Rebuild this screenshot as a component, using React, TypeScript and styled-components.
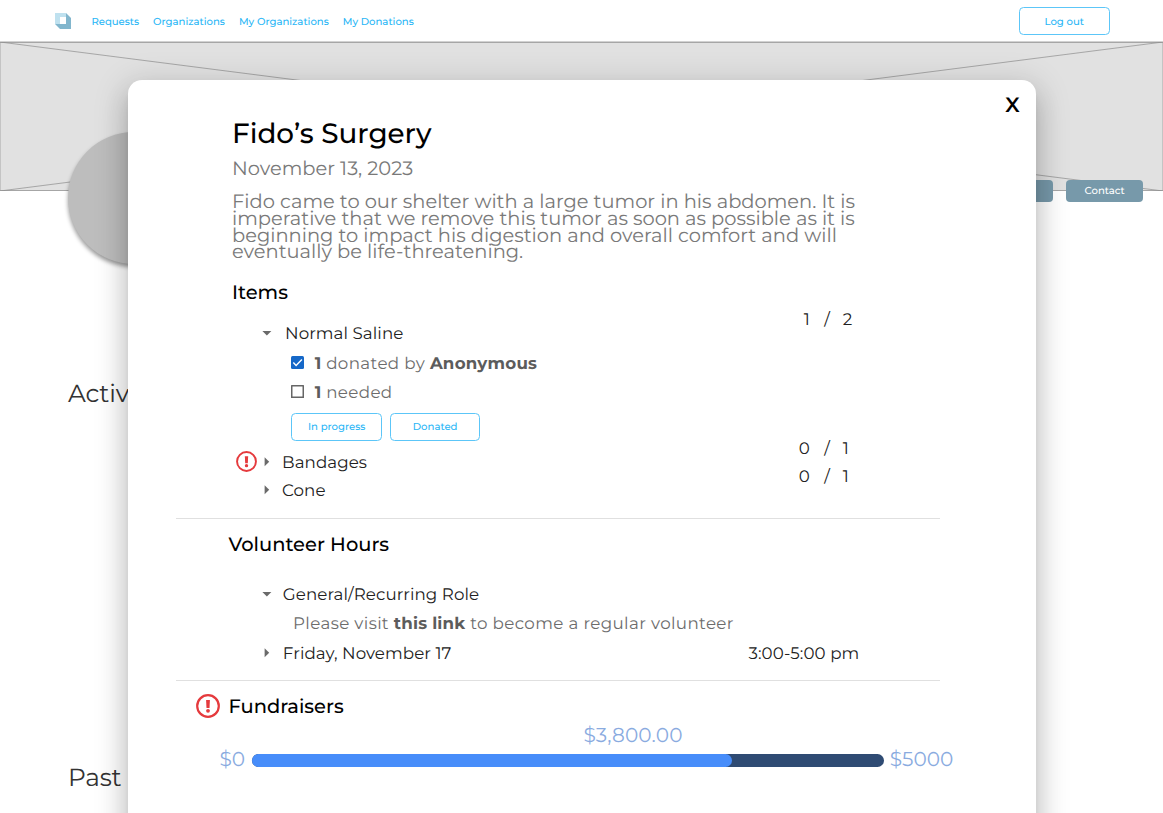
import React from "react";
import styled, { createGlobalStyle } from "styled-components";

const GlobalStyle = createGlobalStyle`
  *, *::before, *::after { box-sizing: border-box; }
  body {
    margin: 0;
    background: #fff;
    font-family: Montserrat, Inter, sans-serif;
    text-rendering: geometricPrecision;
    color: #000;
    overflow: hidden;
  }
  h1, h2, p { margin: 0; }
  button { text-rendering: inherit; }
`;

/* ---------- page behind the dialog ---------- */

const Page = styled.div`
  position: relative;
  height: 813px;
  overflow: hidden;
`;

const Header = styled.header`
  display: flex;
  align-items: center;
  height: 42px;
  padding: 1px 53.5px 0 55px;
  border-bottom: 1px solid #d2d2d2;
`;

const Nav = styled.nav`
  display: flex;
  gap: 14px;
  margin: 1px 0 0 20.4px;
`;

const NavLink = styled.a`
  font-size: 10.1px;
  line-height: 14px;
  font-weight: 500;
  color: #29b6f6;
`;

const OutlineButton = styled.button<{ $push?: boolean }>`
  width: 90.5px;
  height: 28px;
  margin-left: ${(p) => (p.$push ? "auto" : "0")};
  padding: ${(p) => (p.$push ? "1px 0 0" : "0")};
  border: 1px solid #5cc6f8;
  border-radius: 4.5px;
  background: #fff;
  font: 500 10.1px/14px Montserrat, Inter, sans-serif;
  color: #29b6f6;
`;

const Cover = styled.svg`
  display: block;
  width: 1163px;
  height: 149px;
`;

const Profile = styled.div`
  display: flex;
  justify-content: space-between;
  align-items: flex-start;
  height: 246px;
  margin-top: -59.5px;
  padding: 0 20px 0 68px;
`;

const Avatar = styled.div`
  position: relative;
  width: 132px;
  height: 132px;
  border-radius: 50%;
  background: #bdbdbd;
  box-shadow: 0 3px 4px rgba(0, 0, 0, 0.4);
`;

const Actions = styled.div`
  position: relative;
  display: flex;
  gap: 13px;
  margin-top: 48.5px;
`;

const SolidButton = styled.button`
  height: 22px;
  padding: 0 18.2px 1px;
  border: 0;
  border-radius: 4px;
  background: #7799aa;
  font: 500 10.1px/14px Montserrat, Inter, sans-serif;
  color: #fff;
`;

const PageHeading = styled.h2`
  height: 384px;
  padding-left: 68px;
  font-size: 24.8px;
  line-height: 32px;
  font-weight: 400;
  letter-spacing: -0.2px;
  color: #333;
`;

/* ---------- dialog ---------- */

const Dialog = styled.section`
  position: absolute;
  top: 80px;
  left: 128px;
  width: 908px;
  height: 800px;
  padding: 36px 96px 0 48px;
  border-radius: 14px;
  background: #fff;
  box-shadow: 0 8px 10px -5px rgba(0, 0, 0, 0.2), 0 17px 26px 2px rgba(0, 0, 0, 0.14),
    0 6px 32px 6px rgba(0, 0, 0, 0.12);
`;

const CloseButton = styled.button`
  position: absolute;
  top: 13px;
  right: 13.5px;
  width: 20px;
  padding: 0;
  border: 0;
  background: none;
  font: 600 20.8px/26px Montserrat, Inter, sans-serif;
  color: #000;
`;

const Block = styled.div<{ $height: number; $top?: number }>`
  height: ${(p) => p.$height}px;
  padding-top: ${(p) => p.$top ?? 0}px;
  border-bottom: 1px solid #e0e0e0;
`;

const Intro = styled.div`
  padding-left: 56px;
`;

const Title = styled.h1`
  font-size: 27.8px;
  line-height: 34px;
  font-weight: 500;
`;

const DateText = styled.p`
  margin-top: 6px;
  font-size: 19.46px;
  line-height: 24px;
  color: #797979;
`;

const Description = styled.p`
  width: 640px;
  height: 67px;
  margin: 13.2px 0 19.8px;
  font-size: 19.44px;
  line-height: 16.7px;
  color: #797979;
`;

const SectionTitle = styled.h2`
  display: flex;
  align-items: center;
  font-size: 19.46px;
  line-height: 24px;
  font-weight: 500;
`;

const VolunteerTitle = styled(SectionTitle)`
  padding-left: 52.5px;
`;

const FundTitle = styled(SectionTitle)`
  gap: 8.5px;
  padding-left: 20px;
`;

const Row = styled.div<{ $top: number }>`
  display: flex;
  align-items: flex-start;
  height: 20px;
  margin: ${(p) => p.$top}px 0 0 60px;
  font-size: 16.68px;
  line-height: 22px;
  letter-spacing: 0.08px;
  color: #212121;
`;

const AlertSlot = styled.div`
  width: 21px;
  height: 20px;

  svg {
    display: block;
    margin-top: -1px;
  }
`;

const RowLabel = styled.span<{ $indent?: number }>`
  margin-left: ${(p) => p.$indent ?? 5}px;
`;

const Time = styled.span`
  margin: 0 80.7px 0 auto;
`;

const Count = styled.span`
  display: grid;
  grid-template-columns: 11px 7px 10px;
  column-gap: 13px;
  margin: -14px 87.2px 0 auto;

  span:not(:last-child) {
    justify-self: end;
  }
`;

const Detail = styled.div<{ $top: number; $left?: number }>`
  display: flex;
  align-items: center;
  height: 22px;
  margin: ${(p) => p.$top}px 0 0 ${(p) => p.$left ?? 115}px;
  font-size: 16.68px;
  line-height: 22px;
  letter-spacing: 0.38px;
  white-space: pre;
  color: #6c6c6c;

  b {
    font-weight: 700;
    letter-spacing: 0.2px;
    color: #5c5c5c;
  }
`;

const Check = styled.span<{ $on?: boolean }>`
  display: flex;
  width: 13px;
  height: 13px;
  margin: 0 10.7px 3px 0;
  border-radius: ${(p) => (p.$on ? 1.5 : 0.5)}px;
  background: ${(p) => (p.$on ? "#1668c8" : "#fff")};
  box-shadow: ${(p) => (p.$on ? "none" : "inset 0 0 0 1.5px #666")};
`;

const ButtonRow = styled.div`
  display: flex;
  gap: 8px;
  margin: 9px 0 0 115.4px;
`;

const Amount = styled.div`
  height: 24px;
  margin: 5px 0 0 407.5px;
  font-size: 20.1px;
  line-height: 26px;
  letter-spacing: 0.15px;
  color: #8aabdf;
`;

const Meter = styled.div`
  display: flex;
  align-items: center;
  width: 780px;
  padding-left: 43.5px;
  font-size: 20.1px;
  line-height: 26px;
  color: #8aabdf;
`;

const Track = styled.div`
  width: 632px;
  height: 13px;
  margin: 0 6px 0 6.5px;
  border-radius: 6.5px;
  background: #2f4b73;
`;

const Fill = styled.div`
  height: 100%;
  border-radius: 6.5px;
  background: #478dfa;
`;

const Fund = styled.div`
  padding-top: 13px;
`;

/* ---------- icons ---------- */

const Logo = () => (
  <svg width="16" height="16" viewBox="0 0 16 16">
    <path d="M11 0L16 5V16H5L0 11Z" fill="#82b6cd" />
    <path d="M0 0H11V11H0Z" fill="#bfe1ef" />
    <path d="M5 4H11V11H5Z" fill="#fff" />
  </svg>
);

const Caret = ({ open = false }: { open?: boolean }) => (
  <svg width="20" height="20" viewBox="0 0 20 20">
    <path d={open ? "M5.4 8H14.4L9.9 12.5Z" : "M7.6 5.3V14.3L12.2 9.8Z"} fill="#6a6a6a" />
  </svg>
);

const Alert = ({ size }: { size: number }) => (
  <svg width={size} height={size} viewBox="0 0 24 24" fill="none">
    <circle cx="12" cy="12" r="10.8" stroke="#e53a3d" strokeWidth="2.2" />
    <path d="M10.1 6.1H13.9L13.5 14H10.5Z" fill="#e53a3d" />
    <circle cx="12" cy="16.8" r="1.9" fill="#e53a3d" />
  </svg>
);

const Tick = () => (
  <svg width="13" height="13" viewBox="0 0 13 13" fill="none">
    <path d="M2.3 6.6L5.1 9.4L10.9 3.6" stroke="#fff" strokeWidth="1.4" />
  </svg>
);

const Tally = ({ have, need }: { have: number; need: number }) => (
  <Count>
    <span>{have}</span>
    <span>/</span>
    <span>{need}</span>
  </Count>
);

export default function App() {
  const raised = 3800;
  const goal = 5000;

  return (
    <>
      <GlobalStyle />
      <Page>
        <Header>
          <Logo />
          <Nav>
            <NavLink>Requests</NavLink>
            <NavLink>Organizations</NavLink>
            <NavLink>My Organizations</NavLink>
            <NavLink>My Donations</NavLink>
          </Nav>
          <OutlineButton $push>Log out</OutlineButton>
        </Header>
        <Cover viewBox="0 0 1163 149">
          <rect width="1163" height="149" fill="#e1e1e1" />
          <path d="M0.5 0V149M1162.5 0V149" stroke="#c4c4c4" />
          <path d="M0 0.5H1163M0 148.5H1163" stroke="#a6a6a6" />
          <path d="M0 0L1163 149M1163 0L0 149" stroke="#8c8c8c" strokeWidth="0.7" />
        </Cover>
        <Profile>
          <Avatar />
          <Actions>
            <SolidButton>Following</SolidButton>
            <SolidButton>Contact</SolidButton>
          </Actions>
        </Profile>
        <PageHeading>Active Requests</PageHeading>
        <PageHeading>Past Requests</PageHeading>

        <Dialog role="dialog">
          <CloseButton>X</CloseButton>
          <Block $height={403}>
            <Intro>
              <Title>Fido’s Surgery</Title>
              <DateText>November 13, 2023</DateText>
              <Description>
                Fido came to our shelter with a large tumor in his abdomen. It is
                <br />
                imperative that we remove this tumor as soon as possible as it is
                <br />
                beginning to impact his digestion and overall comfort and will
                <br />
                eventually be life-threatening.
              </Description>
              <SectionTitle>Items</SectionTitle>
            </Intro>
            <Row $top={19}>
              <AlertSlot />
              <Caret open />
              <RowLabel $indent={8}>Normal Saline</RowLabel>
              <Tally have={1} need={2} />
            </Row>
            <Detail $top={10}>
              <Check $on>
                <Tick />
              </Check>
              <b>1</b> donated by <b>Anonymous</b>
            </Detail>
            <Detail $top={7}>
              <Check />
              <b>1</b> needed
            </Detail>
            <ButtonRow>
              <OutlineButton>In progress</OutlineButton>
              <OutlineButton>Donated</OutlineButton>
            </ButtonRow>
            <Row $top={11}>
              <AlertSlot>
                <Alert size={21} />
              </AlertSlot>
              <Caret />
              <RowLabel>Bandages</RowLabel>
              <Tally have={0} need={1} />
            </Row>
            <Row $top={8}>
              <AlertSlot />
              <Caret />
              <RowLabel>Cone</RowLabel>
              <Tally have={0} need={1} />
            </Row>
          </Block>

          <Block $height={162} $top={13}>
            <VolunteerTitle>Volunteer Hours</VolunteerTitle>
            <Row $top={28}>
              <AlertSlot />
              <Caret open />
              <RowLabel $indent={5.8}>General/Recurring Role</RowLabel>
            </Row>
            <Detail $top={9} $left={117}>
              Please visit <b>this link</b> to become a regular volunteer
            </Detail>
            <Row $top={8}>
              <AlertSlot />
              <Caret />
              <RowLabel $indent={5.8}>Friday, November 17</RowLabel>
              <Time>3:00-5:00 pm</Time>
            </Row>
          </Block>

          <Fund>
            <FundTitle>
              <Alert size={24} />
              Fundraisers
            </FundTitle>
            <Amount>$3,800.00</Amount>
            <Meter>
              $0
              <Track>
                <Fill style={{ width: `${(raised / goal) * 100}%` }} />
              </Track>
              $5000
            </Meter>
          </Fund>
        </Dialog>
      </Page>
    </>
  );
}
